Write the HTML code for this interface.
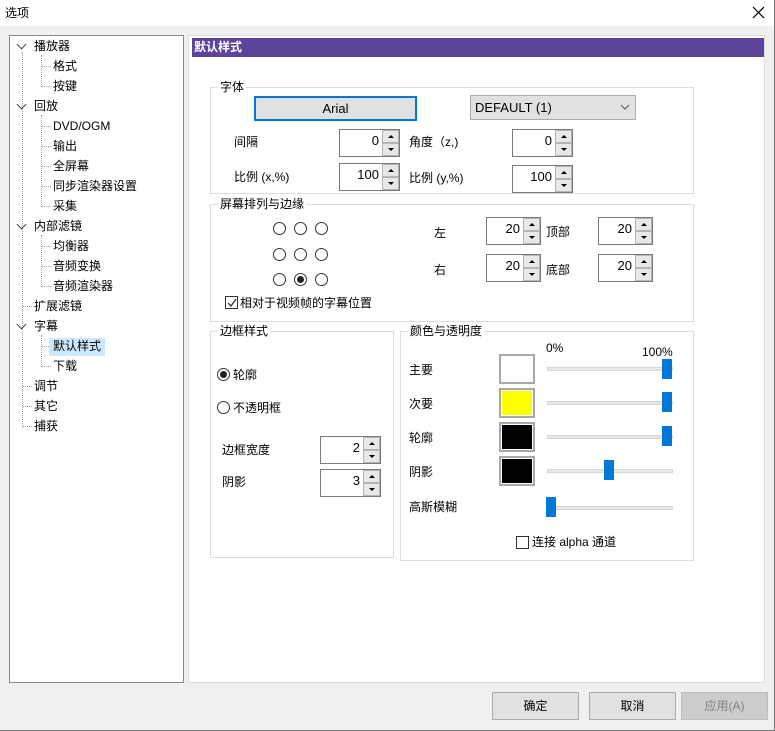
<!DOCTYPE html>
<html><head><meta charset="utf-8"><style>
*{box-sizing:border-box;margin:0;padding:0}
body{width:775px;height:731px;background:#f0f0f0;font-family:"Liberation Sans","Noto Sans CJK SC",sans-serif;font-size:12px;color:#000;position:relative;overflow:hidden}
.a{position:absolute}
.t{position:absolute;white-space:nowrap;line-height:14px}
.grp{position:absolute;border:1px solid #dcdcdc}
.gl{position:absolute;background:#fff;padding:0 2px;line-height:14px;top:-8px;left:7px}
.spin{position:absolute;border:1px solid #7a7a7a;background:#fff;height:28px}
.spin .v{position:absolute;right:20px;top:3px;font-size:13px}
.spin .b{position:absolute;right:0;width:17px;height:13px;background:#e8e8e8;border:1px solid #b4b4b4}
.spin .u{top:0}.spin .d{bottom:0}
.spin .b:after{content:"";position:absolute;left:5px;border-left:3px solid transparent;border-right:3px solid transparent}
.spin .u:after{top:4px;border-bottom:3px solid #000}
.spin .d:after{top:4px;border-top:3px solid #000}
.rad{position:absolute;width:13px;height:13px;border:1px solid #333;border-radius:50%;background:#fff}
.rad.on:after{content:"";position:absolute;left:2px;top:2px;width:7px;height:7px;border-radius:50%;background:#222}
.chk{position:absolute;width:13px;height:13px;border:1px solid #333;background:#fff}
.sw{position:absolute;left:499px;width:36px;height:30px;border:2px solid #a8a8a8}
.sw i{position:absolute;inset:1px}
.tr{position:absolute;left:547px;width:126px;height:4px;background:#e7e7e7;border:1px solid #d6d6d6}
.th{position:absolute;width:10px;height:20px;background:#0078d7}
.btn{position:absolute;top:692px;width:87px;height:28px;border:1px solid #adadad;background:#e1e1e1;text-align:center;line-height:26px}
.dl{position:absolute;border-left:1px dotted #a0a0a0}
.dh{position:absolute;border-top:1px dotted #a0a0a0;height:0}
.chev{position:absolute;width:7px;height:7px;border-right:1.5px solid #444;border-bottom:1.5px solid #444;transform:rotate(45deg)}
</style></head><body>
<div class="a" style="left:0;top:0;width:775px;height:26px;background:#fff"></div>
<div class="t" style="left:5px;top:6px;font-size:12px">选项</div>
<svg class="a" style="left:752px;top:6px" width="13" height="13"><path d="M1 1L12 12M12 1L1 12" stroke="#000" stroke-width="1.2"/></svg>
<div class="a" style="left:774px;top:0;width:1px;height:731px;background:#777"></div>
<div class="a" style="left:0;top:730px;width:775px;height:1px;background:#777"></div>

<!-- tree -->
<div class="a" style="left:9px;top:35px;width:175px;height:648px;background:#fff;border:1px solid #828790"></div>
<div class="dl" style="left:22px;top:52px;height:376px"></div>
<div class="dl" style="left:41px;top:55px;height:32px"></div>
<div class="dl" style="left:41px;top:115px;height:92px"></div>
<div class="dl" style="left:41px;top:235px;height:52px"></div>
<div class="dl" style="left:41px;top:335px;height:32px"></div>
<div class="dh" style="left:42px;top:66px;width:9px"></div><div class="dh" style="left:42px;top:86px;width:9px"></div>
<div class="dh" style="left:42px;top:126px;width:9px"></div><div class="dh" style="left:42px;top:146px;width:9px"></div><div class="dh" style="left:42px;top:166px;width:9px"></div><div class="dh" style="left:42px;top:186px;width:9px"></div><div class="dh" style="left:42px;top:206px;width:9px"></div>
<div class="dh" style="left:42px;top:246px;width:9px"></div><div class="dh" style="left:42px;top:266px;width:9px"></div><div class="dh" style="left:42px;top:286px;width:9px"></div>
<div class="dh" style="left:42px;top:346px;width:9px"></div><div class="dh" style="left:42px;top:366px;width:9px"></div>
<div class="dh" style="left:23px;top:306px;width:9px"></div><div class="dh" style="left:23px;top:386px;width:9px"></div><div class="dh" style="left:23px;top:406px;width:9px"></div><div class="dh" style="left:23px;top:426px;width:9px"></div>
<div class="chev" style="left:18px;top:41px"></div><div class="chev" style="left:18px;top:101px"></div><div class="chev" style="left:18px;top:221px"></div><div class="chev" style="left:18px;top:321px"></div>
<div class="a" style="left:49px;top:338px;width:56px;height:18px;background:#cce8ff"></div>
<div class="t" style="left:34px;top:39px">播放器</div>
<div class="t" style="left:53px;top:59px">格式</div>
<div class="t" style="left:53px;top:79px">按键</div>
<div class="t" style="left:34px;top:99px">回放</div>
<div class="t" style="left:53px;top:119px">DVD/OGM</div>
<div class="t" style="left:53px;top:139px">输出</div>
<div class="t" style="left:53px;top:159px">全屏幕</div>
<div class="t" style="left:53px;top:179px">同步渲染器设置</div>
<div class="t" style="left:53px;top:199px">采集</div>
<div class="t" style="left:34px;top:219px">内部滤镜</div>
<div class="t" style="left:53px;top:239px">均衡器</div>
<div class="t" style="left:53px;top:259px">音频变换</div>
<div class="t" style="left:53px;top:279px">音频渲染器</div>
<div class="t" style="left:34px;top:299px">扩展滤镜</div>
<div class="t" style="left:34px;top:319px">字幕</div>
<div class="t" style="left:53px;top:339px">默认样式</div>
<div class="t" style="left:53px;top:359px">下载</div>
<div class="t" style="left:34px;top:379px">调节</div>
<div class="t" style="left:34px;top:399px">其它</div>
<div class="t" style="left:34px;top:419px">捕获</div>

<!-- right panel -->
<div class="a" style="left:188px;top:35px;width:577px;height:648px;background:#fff;border:1px solid #dcdcdc"></div>
<div class="a" style="left:192px;top:38px;width:572px;height:19px;background:#5c449b"></div>
<div class="t" style="left:194px;top:40px;color:#fff;font-weight:bold">默认样式</div>

<div class="grp" style="left:210px;top:87px;width:484px;height:107px"><div class="gl">字体</div></div>
<div class="a" style="left:254px;top:96px;width:163px;height:25px;background:#e1e1e1;border:2px solid #0078d7;text-align:center;line-height:21px;font-size:13px">Arial</div>
<div class="a" style="left:470px;top:95px;width:166px;height:25px;background:#e1e1e1;border:1px solid #adadad;padding-left:4px;line-height:23px;font-size:13px">DEFAULT (1)</div>
<svg class="a" style="left:620px;top:104px" width="10" height="6"><path d="M1 1L5 5L9 1" stroke="#555" fill="none"/></svg>
<div class="t" style="left:234px;top:135px">间隔</div>
<div class="spin" style="left:339px;top:129px;width:61px"><span class="v">0</span><i class="b u"></i><i class="b d"></i></div>
<div class="t" style="left:409px;top:135px">角度（z,)</div>
<div class="spin" style="left:512px;top:129px;width:61px"><span class="v">0</span><i class="b u"></i><i class="b d"></i></div>
<div class="t" style="left:234px;top:170px">比例 (x,%)</div>
<div class="spin" style="left:339px;top:163px;width:61px"><span class="v">100</span><i class="b u"></i><i class="b d"></i></div>
<div class="t" style="left:409px;top:171px">比例 (y,%)</div>
<div class="spin" style="left:512px;top:165px;width:61px"><span class="v">100</span><i class="b u"></i><i class="b d"></i></div>

<div class="grp" style="left:210px;top:204px;width:484px;height:118px"><div class="gl">屏幕排列与边缘</div></div>
<div class="rad" style="left:273px;top:222px"></div><div class="rad" style="left:294px;top:222px"></div><div class="rad" style="left:315px;top:222px"></div>
<div class="rad" style="left:273px;top:248px"></div><div class="rad" style="left:294px;top:248px"></div><div class="rad" style="left:315px;top:248px"></div>
<div class="rad" style="left:273px;top:273px"></div><div class="rad on" style="left:294px;top:273px"></div><div class="rad" style="left:315px;top:273px"></div>
<div class="chk" style="left:225px;top:296px"></div>
<svg class="a" style="left:226px;top:297px" width="12" height="12"><path d="M2 6L5 9L10 2" stroke="#333" fill="none" stroke-width="1.3"/></svg>
<div class="t" style="left:240px;top:296px">相对于视频帧的字幕位置</div>
<div class="t" style="left:434px;top:226px">左</div>
<div class="spin" style="left:486px;top:217px;width:55px"><span class="v">20</span><i class="b u"></i><i class="b d"></i></div>
<div class="t" style="left:546px;top:225px">顶部</div>
<div class="spin" style="left:598px;top:217px;width:55px"><span class="v">20</span><i class="b u"></i><i class="b d"></i></div>
<div class="t" style="left:434px;top:263px">右</div>
<div class="spin" style="left:486px;top:254px;width:55px"><span class="v">20</span><i class="b u"></i><i class="b d"></i></div>
<div class="t" style="left:546px;top:263px">底部</div>
<div class="spin" style="left:598px;top:254px;width:55px"><span class="v">20</span><i class="b u"></i><i class="b d"></i></div>

<div class="grp" style="left:210px;top:331px;width:184px;height:227px"><div class="gl">边框样式</div></div>
<div class="rad on" style="left:217px;top:368px"></div><div class="t" style="left:233px;top:368px">轮廓</div>
<div class="rad" style="left:217px;top:401px"></div><div class="t" style="left:233px;top:401px">不透明框</div>
<div class="t" style="left:222px;top:443px">边框宽度</div>
<div class="spin" style="left:320px;top:436px;width:61px"><span class="v">2</span><i class="b u"></i><i class="b d"></i></div>
<div class="t" style="left:222px;top:475px">阴影</div>
<div class="spin" style="left:320px;top:469px;width:61px"><span class="v">3</span><i class="b u"></i><i class="b d"></i></div>

<div class="grp" style="left:400px;top:331px;width:294px;height:230px"><div class="gl">颜色与透明度</div></div>
<div class="t" style="left:546px;top:341px">0%</div>
<div class="t" style="left:642px;top:345px">100%</div>
<div class="t" style="left:409px;top:363px">主要</div>
<div class="sw" style="top:354px"><i style="background:#fff"></i></div>
<div class="tr" style="top:367px"></div><div class="th" style="left:662px;top:359px"></div>
<div class="t" style="left:409px;top:397px">次要</div>
<div class="sw" style="top:388px"><i style="background:#ff0"></i></div>
<div class="tr" style="top:401px"></div><div class="th" style="left:662px;top:392px"></div>
<div class="t" style="left:409px;top:431px">轮廓</div>
<div class="sw" style="top:422px"><i style="background:#000"></i></div>
<div class="tr" style="top:435px"></div><div class="th" style="left:662px;top:426px"></div>
<div class="t" style="left:409px;top:465px">阴影</div>
<div class="sw" style="top:456px"><i style="background:#000"></i></div>
<div class="tr" style="top:469px"></div><div class="th" style="left:604px;top:460px"></div>
<div class="t" style="left:409px;top:500px">高斯模糊</div>
<div class="tr" style="top:506px"></div><div class="th" style="left:546px;top:497px"></div>
<div class="chk" style="left:516px;top:536px"></div>
<div class="t" style="left:532px;top:535px">连接 alpha 通道</div>

<div class="btn" style="left:492px">确定</div>
<div class="btn" style="left:589px">取消</div>
<div class="btn" style="left:681px;background:#ccc;border-color:#bfbfbf;color:#838383">应用(A)</div>
</body></html>
